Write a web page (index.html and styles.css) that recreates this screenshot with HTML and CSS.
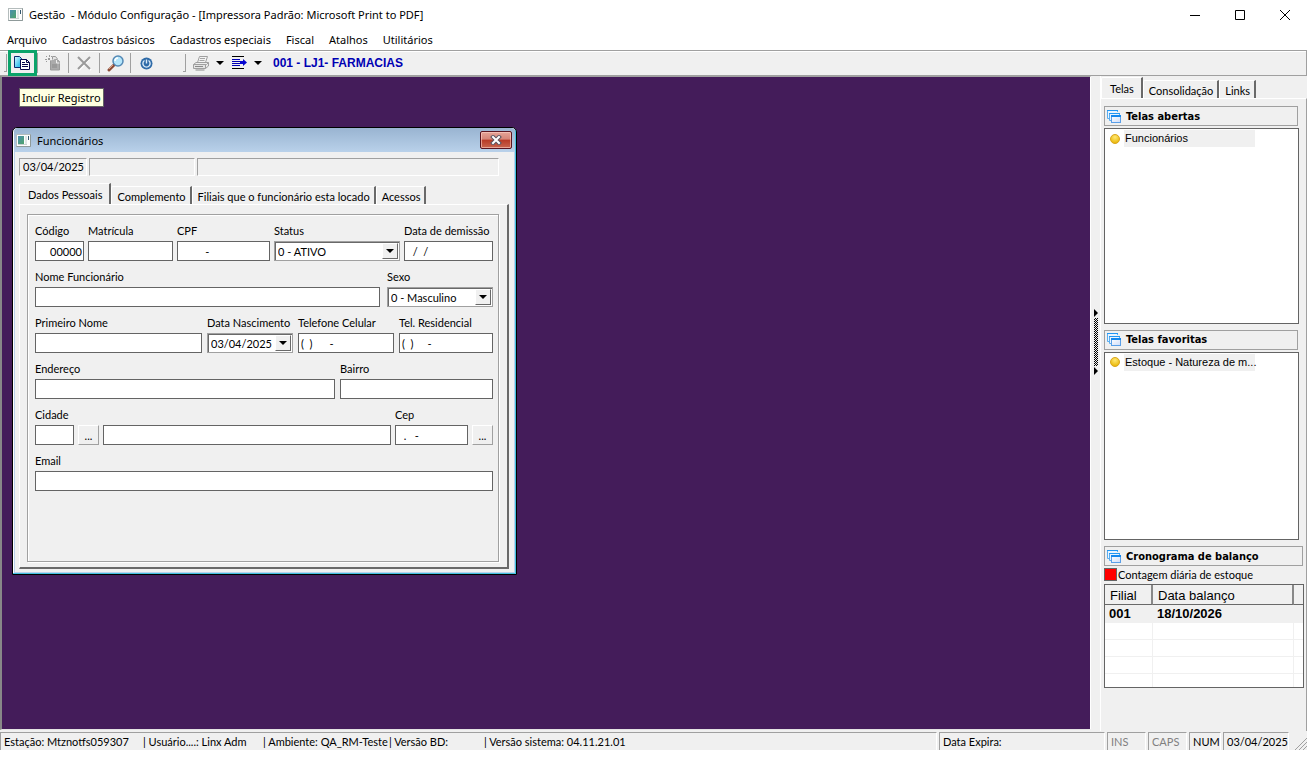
FILE: index.html
```html
<!DOCTYPE html>
<html lang="pt-BR">
<head>
    <meta charset="UTF-8">
    <meta name="viewport" content="width=device-width, initial-scale=1.0">
    <title>Gestão - Módulo Configuração</title>
    <link rel="stylesheet" href="styles.css">
</head>
<body>
    <!-- Shared icons -->
    <svg class="icon-defs" aria-hidden="true">
        <defs>
            <linearGradient id="app-green" x1="0" y1="0" x2="1" y2="1">
                <stop offset="0" stop-color="#4a8fb0"/>
                <stop offset="1" stop-color="#4fa36a"/>
            </linearGradient>
            <radialGradient id="ball-fill" cx="0.5" cy="0.3" r="0.7">
                <stop offset="0" stop-color="#ffe873"/>
                <stop offset="1" stop-color="#e8b400"/>
            </radialGradient>
            <linearGradient id="pane-fill" x1="0" y1="0" x2="1" y2="1">
                <stop offset="0" stop-color="#ffffff"/>
                <stop offset="1" stop-color="#cfdcf8"/>
            </linearGradient>
            <linearGradient id="page-cyan" x1="0" y1="0" x2="1" y2="1">
                <stop offset="0.1" stop-color="#c8f4ff"/>
                <stop offset="0.7" stop-color="#3fc4f0"/>
            </linearGradient>
        </defs>
        <symbol id="icon-app" viewBox="0 0 15 13">
            <rect x="0.5" y="0.5" width="14" height="12" fill="#fdfdfd" stroke="#b4bcbc"/>
            <path d="M0.5 12.5H14.5V0.5" fill="none" stroke="#8f9a9a"/>
            <rect x="2" y="2" width="6" height="8" fill="url(#app-green)"/>
            <rect x="9" y="2" width="2" height="8" fill="#dfe6e6"/>
            <path d="M12.5 2v4" stroke="#34566e"/>
            <path d="M2 10.5h9" stroke="#c9d2d2"/>
        </symbol>
        <symbol id="icon-windows" viewBox="0 0 15 15">
            <path d="M2 9.5H0.5V1.5H10.500V3" fill="#eaf4ff" stroke="#5aaef0"/>
            <path d="M0 1.5h11" stroke="#2196f3"/>
            <path d="M4 11.500H2.500V4.500H12.500V6" fill="#eaf4ff" stroke="#5aaef0"/>
            <path d="M2 4.5h11" stroke="#2196f3"/>
            <rect x="4.500" y="7" width="9" height="6.500" fill="url(#pane-fill)" stroke="#5a9fe8"/>
            <path d="M4 7h10" stroke="#1488ee" stroke-width="2"/>
        </symbol>
        <symbol id="icon-ball" viewBox="0 0 10 10">
            <circle cx="5" cy="5" r="4.500" fill="url(#ball-fill)" stroke="#d9a520"/>
        </symbol>
    </svg>

    <div class="app">
        <!-- Title bar -->
        <header class="title-bar">
            <svg class="app-icon"><use href="#icon-app"/></svg>
            <span class="title-text">Gestão&nbsp; - Módulo Configuração - [Impressora Padrão: Microsoft Print to PDF]</span>
            <div class="window-buttons">
                <button type="button" aria-label="Minimizar"><svg viewBox="0 0 12 12"><path d="M1 6.5h10"/></svg></button>
                <button type="button" aria-label="Maximizar"><svg viewBox="0 0 12 12"><path d="M1.500 1.500h9v9h-9z"/></svg></button>
                <button type="button" aria-label="Fechar"><svg viewBox="0 0 12 12"><path d="M1 1l10 10M11 1L1 11"/></svg></button>
            </div>
        </header>

        <!-- Menu -->
        <nav class="menu-bar">
            <button type="button">Arquivo</button>
            <button type="button">Cadastros básicos</button>
            <button type="button">Cadastros especiais</button>
            <button type="button">Fiscal</button>
            <button type="button">Atalhos</button>
            <button type="button">Utilitários</button>
        </nav>

        <!-- Toolbar -->
        <div class="toolbar">
            <span class="grip"></span>
            <button type="button" class="tool tool-active" aria-label="Incluir Registro">
                <svg width="17" height="14" viewBox="0 0 17 14">
                    <path d="M0.500 0.500H5.500L7.500 2.500V11.500H0.500Z" fill="url(#page-cyan)" stroke="#0a2a6e"/>
                    <path d="M6.500 3.500H12.500L15.500 6.500V13.500H6.500Z" fill="#fff" stroke="#06064a"/>
                    <path d="M12.500 3.500V6.500H15.500M8 6.500h3M8 8.500h6M8 10.500h6" fill="none" stroke="#06064a"/>
                </svg>
            </button>
            <span class="divider"></span>
            <button type="button" class="tool" aria-label="Colar">
                <svg width="16" height="16" viewBox="0 0 16 16">
                    <path d="M5.500 5.500V15H14.500V6.500L12 4.500H9" fill="#ababab" stroke="#9a9a9a"/>
                    <path d="M7.500 4.500v-3h3l2 2.500" fill="#e4e4e4" stroke="#9a9a9a"/>
                    <rect x="7" y="9" width="5" height="4" fill="#9a9a9a"/>
                    <path d="M11.500 5v3h3" fill="none" stroke="#eee"/>
                    <path d="M1 1l1 1M4.500 0v2M7 1L6 2M0 4.500h2M1 7l1-1M3 3l2 2M5 3L3 5" fill="none" stroke="#9a9a9a"/>
                </svg>
            </button>
            <span class="divider"></span>
            <button type="button" class="tool" aria-label="Excluir">
                <svg width="15" height="15" viewBox="0 0 15 15">
                    <path d="M2 2L14 14M13 2L2 14" fill="none" stroke="#fff" stroke-width="2"/>
                    <path d="M1 1L13 13M13 1L1 13" fill="none" stroke="#9a9a9a" stroke-width="2"/>
                </svg>
            </button>
            <span class="divider"></span>
            <button type="button" class="tool" aria-label="Pesquisar">
                <svg width="17" height="17" viewBox="0 0 17 17">
                    <path d="M2 15L7 10" stroke="#8b4a35" stroke-width="3" stroke-linecap="round"/>
                    <path d="M2 14L6 10" stroke="#d9a184" stroke-width="1"/>
                    <circle cx="11" cy="6" r="5" fill="#b5e6fb" stroke="#5489b5" stroke-width="1.500"/>
                    <path d="M8 6a3 3 0 0 1 3-3" fill="none" stroke="#fff" stroke-width="1.500"/>
                </svg>
            </button>
            <span class="divider"></span>
            <button type="button" class="tool" aria-label="Sair">
                <svg width="13" height="13" viewBox="0 0 13 13">
                    <circle cx="6.500" cy="6.500" r="6" fill="#2f6ba8"/>
                    <path d="M4.500 3.500a3.600 3.600 0 1 0 4 0M6.500 2.500v4" fill="none" stroke="#dcebf8" stroke-width="1.400"/>
                </svg>
            </button>
            <span class="grip grip-second"></span>
            <button type="button" class="tool" aria-label="Imprimir">
                <svg width="18" height="15" viewBox="0 0 18 15">
                    <path d="M5.500 6.500L7.500 0.500H15.500L13.500 6.500" fill="#f4f4f4" stroke="#a0a0a0"/>
                    <path d="M8 2.500h5M7.500 4.500h5" stroke="#a5a5a5"/>
                    <path d="M1.500 8.500L4 6.500H16.500L14.500 8.500Z" fill="#eee" stroke="#a0a0a0"/>
                    <path d="M1.500 8.500H13.500V12.500H1.500ZM13.500 12.500L16.500 10V6.500" fill="#e4e4e4" stroke="#a0a0a0"/>
                    <path d="M3 10.500h8M3.500 14h9" stroke="#8a8a8a" stroke-width="1"/>
                </svg>
            </button>
            <button type="button" class="drop" aria-label="Opções de impressão"><span class="arrow-down"></span></button>
            <button type="button" class="tool" aria-label="Lista">
                <svg width="16" height="14" viewBox="0 0 16 14">
                    <path d="M1 0.500h12M1 12.500h12" stroke="#000"/>
                    <path d="M1 3.500h8M1 5.500h8M1 7.500h8M1 9.500h8" stroke="#0000b4"/>
                    <path d="M9 6.500h4" stroke="#0606d0" stroke-width="3"/>
                    <path d="M12 3v7L16 6.500z" fill="#0606d0"/>
                </svg>
            </button>
            <button type="button" class="drop" aria-label="Opções da lista"><span class="arrow-down"></span></button>
            <span class="branch">001 - LJ1- FARMACIAS</span>
        </div>

        <main class="workspace">
            <!-- Desktop with the child window -->
            <section class="desktop">
                <div class="tooltip" role="tooltip">Incluir Registro</div>

                <div class="child-window">
                    <div class="child-title">
                        <svg class="app-icon"><use href="#icon-app"/></svg>
                        <span>Funcionários</span>
                        <button type="button" class="close-btn" aria-label="Fechar">
                            <svg width="12" height="10" viewBox="0 0 12 10">
                                <path d="M3 2L9 8M9 2L3 8" stroke="#5b5560" stroke-width="4" stroke-linecap="square"/>
                                <path d="M3 2L9 8M9 2L3 8" stroke="#fff" stroke-width="2" stroke-linecap="square"/>
                            </svg>
                        </button>
                    </div>
                    <div class="info-row">
                        <span class="info-cell">03/04/2025</span>
                        <span class="info-cell"></span>
                        <span class="info-cell"></span>
                    </div>
                    <div class="tabs form-tabs" role="tablist">
                        <button type="button" role="tab" class="tab tab-selected" aria-selected="true">Dados Pessoais</button>
                        <button type="button" role="tab" class="tab">Complemento</button>
                        <button type="button" role="tab" class="tab">Filiais que o funcionário esta locado</button>
                        <button type="button" role="tab" class="tab">Acessos</button>
                    </div>
                    <div class="tab-page">
                        <form class="employee-form">
                            <div class="form-row row-code">
                                <div class="field">
                                    <label for="codigo">Código</label>
                                    <input type="text" id="codigo" class="align-right" value="00000">
                                </div>
                                <div class="field">
                                    <label for="matricula">Matrícula</label>
                                    <input type="text" id="matricula">
                                </div>
                                <div class="field">
                                    <label for="cpf">CPF</label>
                                    <input type="text" id="cpf" value="         -">
                                </div>
                                <div class="field">
                                    <label for="status">Status</label>
                                    <div class="combo">
                                        <select id="status"><option>0 - ATIVO</option></select>
                                        <span class="combo-btn"><span class="arrow-down"></span></span>
                                    </div>
                                </div>
                                <div class="field">
                                    <label for="demissao">Data de demissão</label>
                                    <input type="text" id="demissao" value="  /  /">
                                </div>
                            </div>
                            <div class="form-row row-name">
                                <div class="field">
                                    <label for="nome">Nome Funcionário</label>
                                    <input type="text" id="nome">
                                </div>
                                <div class="field">
                                    <label for="sexo">Sexo</label>
                                    <div class="combo">
                                        <select id="sexo"><option>0 - Masculino</option></select>
                                        <span class="combo-btn"><span class="arrow-down"></span></span>
                                    </div>
                                </div>
                            </div>
                            <div class="form-row row-phone">
                                <div class="field">
                                    <label for="primeiro-nome">Primeiro Nome</label>
                                    <input type="text" id="primeiro-nome">
                                </div>
                                <div class="field">
                                    <label for="nascimento">Data Nascimento</label>
                                    <div class="combo">
                                        <input type="text" id="nascimento" value="03/04/2025">
                                        <button type="button" class="combo-btn" aria-label="Abrir calendário"><span class="arrow-down"></span></button>
                                    </div>
                                </div>
                                <div class="field">
                                    <label for="celular">Telefone Celular</label>
                                    <input type="text" id="celular" value="(  )      -">
                                </div>
                                <div class="field">
                                    <label for="residencial">Tel. Residencial</label>
                                    <input type="text" id="residencial" value="(  )     -">
                                </div>
                            </div>
                            <div class="form-row row-address">
                                <div class="field">
                                    <label for="endereco">Endereço</label>
                                    <input type="text" id="endereco">
                                </div>
                                <div class="field">
                                    <label for="bairro">Bairro</label>
                                    <input type="text" id="bairro">
                                </div>
                            </div>
                            <div class="form-row row-city">
                                <div class="field">
                                    <label for="cidade">Cidade</label>
                                    <input type="text" id="cidade">
                                </div>
                                <button type="button" class="lookup" aria-label="Buscar cidade">...</button>
                                <input type="text" aria-label="Nome da cidade">
                                <div class="field">
                                    <label for="cep">Cep</label>
                                    <input type="text" id="cep" value="  .   -">
                                </div>
                                <button type="button" class="lookup" aria-label="Buscar cep">...</button>
                            </div>
                            <div class="form-row">
                                <div class="field">
                                    <label for="email">Email</label>
                                    <input type="text" id="email">
                                </div>
                            </div>
                        </form>
                    </div>
                </div>
            </section>

            <!-- Splitter -->
            <div class="splitter">
                <span class="arrow-right"></span>
                <span class="splitter-dots"></span>
                <span class="arrow-right"></span>
            </div>

            <!-- Side panel -->
            <aside class="side-panel">
                <div class="tabs side-tabs" role="tablist">
                    <button type="button" role="tab" class="tab tab-selected" aria-selected="true">Telas</button>
                    <button type="button" role="tab" class="tab">Consolidação</button>
                    <button type="button" role="tab" class="tab">Links</button>
                </div>
                <div class="side-page">
                    <h2 class="side-heading"><svg><use href="#icon-windows"/></svg>Telas abertas</h2>
                    <ul class="screen-list list-open">
                        <li><svg><use href="#icon-ball"/></svg><span>Funcionários</span></li>
                    </ul>
                    <h2 class="side-heading"><svg><use href="#icon-windows"/></svg>Telas favoritas</h2>
                    <ul class="screen-list list-favorites">
                        <li><svg><use href="#icon-ball"/></svg><span>Estoque - Natureza de m...</span></li>
                    </ul>
                    <h2 class="side-heading heading-wide"><svg><use href="#icon-windows"/></svg>Cronograma de balanço</h2>
                    <div class="legend"><span class="legend-color"></span>Contagem diária de estoque</div>
                    <table class="schedule">
                        <thead>
                            <tr><th class="col-branch">Filial</th><th>Data balanço</th><th class="col-end"></th></tr>
                        </thead>
                        <tbody>
                            <tr class="row-selected"><td>001</td><td>18/10/2026</td><td></td></tr>
                            <tr><td></td><td></td><td></td></tr>
                            <tr><td></td><td></td><td></td></tr>
                            <tr><td></td><td></td><td></td></tr>
                            <tr class="row-last"><td></td><td></td><td></td></tr>
                        </tbody>
                    </table>
                </div>
            </aside>
        </main>

        <!-- Status bar -->
        <footer class="status-bar">
            <div class="status-cell status-main">
                <span class="status-station">Estação: Mtznotfs059307</span>
                <span class="status-user">| Usuário....: Linx Adm</span>
                <span class="status-env">| Ambiente: QA_RM-Teste</span>
                <span class="status-db">| Versão BD:</span>
                <span>| Versão sistema: 04.11.21.01</span>
            </div>
            <div class="status-cell status-expire">Data Expira:</div>
            <div class="status-cell status-key key-off">INS</div>
            <div class="status-cell status-key key-off">CAPS</div>
            <div class="status-cell status-num">NUM</div>
            <div class="status-cell status-date">03/04/2025</div>
            <svg class="resize-grip" viewBox="0 0 12 12"><path d="M0 12L12 0M4 12L12 4M8 12L12 8" stroke="#a0a0a0"/></svg>
        </footer>
    </div>
</body>
</html>
```
FILE: styles.css
```css
* {
    box-sizing: border-box;
}
body {
    margin: 0;
    background-color: #fff;
    color: #000;
    font-family: Lato, "Liberation Sans", sans-serif;
    font-size: 11px;
}
button, input, select {
    font: inherit;
    color: inherit;
    border-radius: 0;
    margin: 0;
    padding: 0;
}
button {
    border: none;
    background: none;
}
.icon-defs {
    position: absolute;
    width: 0;
    height: 0;
}
.app {
    display: flex;
    flex-direction: column;
    height: calc(100vh - 26px);
    min-height: 700px;
}
/* Title bar */
.title-bar {
    display: flex;
    align-items: center;
    height: 29px;
    padding-left: 8px;
    font-family: "Noto Sans", "Open Sans", sans-serif;
}
.app-icon {
    width: 15px;
    height: 13px;
    margin-right: 6px;
}
.window-buttons {
    display: flex;
    margin-left: auto;
}
.window-buttons button {
    display: flex;
    align-items: center;
    justify-content: center;
    width: 45px;
    height: 29px;
}
.window-buttons svg {
    width: 12px;
    height: 12px;
    fill: none;
    stroke: #000;
}
/* Menu */
.menu-bar {
    display: flex;
    align-items: center;
    gap: 15px;
    height: 21px;
    padding-left: 7px;
    font-family: "Noto Sans", "Open Sans", sans-serif;
}
/* Toolbar */
.toolbar {
    display: flex;
    align-items: center;
    height: 26px;
    padding-left: 4px;
    background-color: #f0f0f0;
    border: 1px solid #a0a0a0;
    border-left: none;
    box-shadow: inset 0 1px 0 #fff;
}
.grip {
    width: 3px;
    height: 18px;
    border-right: 1px solid #a0a0a0;
    border-bottom: 1px solid #a0a0a0;
}
.grip-second {
    margin-left: 22px;
}
.divider {
    width: 1px;
    height: 20px;
    background-color: #a0a0a0;
}
.tool {
    display: flex;
    align-items: center;
    justify-content: center;
    width: 30px;
    height: 22px;
}
.tool-active {
    position: relative;
    outline: 3px solid #0ba36a;
    background-color: #f0f0f0;
    width: 23px;
    height: 20px;
    margin: 0 3px 0 4px;
    z-index: 2;
}
.drop {
    display: flex;
    justify-content: center;
    width: 8px;
}
.arrow-down {
    width: 0;
    height: 0;
    border: 4px solid transparent;
    border-top-color: #000;
    border-bottom: none;
}
.branch {
    margin-left: 11px;
    color: #0000b4;
    font-family: "Liberation Sans", Arial, sans-serif;
    font-size: 12px;
    font-weight: bold;
}
/* Workspace */
.workspace {
    display: flex;
    flex: 1;
    min-height: 0;
    background-color: #f0f0f0;
}
.desktop {
    position: relative;
    flex: 1;
    overflow: hidden;
    background-color: #441c5a;
    border: 1px solid #a0a0a0;
    border-left: 2px solid #888;
    border-right-color: #fff;
    border-bottom-color: #e3e3e3;
    margin-bottom: 1px;
}
.tooltip {
    position: absolute;
    left: 17px;
    top: 11px;
    padding: 0 2px;
    line-height: 17px;
    border: 1px solid #646464;
    background-color: #ffffe1;
    font-family: "Noto Sans", "Open Sans", sans-serif;
}
/* Child window */
.child-window {
    position: absolute;
    left: 10px;
    top: 50px;
    display: flex;
    flex-direction: column;
    width: 505px;
    height: 448px;
    padding: 0 4px 4px;
    background-color: #f0f0f0;
    border: 1px solid #000;
    border-radius: 5px 5px 0 0;
    box-shadow: inset -1px -1px 0 #43c0e0, inset 1px 1px 0 #fff, inset -2px -2px 0 #b9d1ea, inset 2px 0 0 #b9d1ea;
}
.child-title {
    display: flex;
    align-items: center;
    height: 24px;
    margin: 0 -3px 6px;
    padding-left: 2px;
    background: linear-gradient(#99b4d1, #b9d1ea);
    border-radius: 4px 4px 0 0;
    font-family: "Noto Sans", "Open Sans", sans-serif;
}
.close-btn {
    display: flex;
    align-items: center;
    justify-content: center;
    width: 32px;
    height: 18px;
    margin: 0 3px 0 auto;
    border: 1px solid #5a1520;
    border-radius: 2px;
    background: linear-gradient(#e5a498 0%, #d68577 45%, #b83a26 50%, #c9654f 100%);
    box-shadow: inset 0 0 0 1px rgba(255, 210, 200, 0.6);
}
.info-row {
    display: grid;
    grid-template-columns: 68px 106px 1fr;
    gap: 2px;
    margin: 0 13px 7px 2px;
}
.info-cell {
    height: 18px;
    padding-left: 3px;
    line-height: 16px;
    border: 1px solid #fff;
    border-top-color: #a0a0a0;
    border-left-color: #a0a0a0;
}
/* Tabs */
.tabs {
    display: flex;
    align-items: flex-end;
}
.tab {
    height: 18px;
    padding: 1px 4px 0 5px;
    border-top: 1px solid #fff;
    border-left: 1px solid #fff;
    border-right: 2px solid #696969;
    border-top-left-radius: 2px;
    white-space: nowrap;
}
.tab-selected {
    height: 21px;
    padding: 1px 7px 0 8px;
}
.form-tabs {
    margin: 0 2px;
}
.tab-page {
    display: flex;
    flex: 1;
    padding: 9px 8px 5px 7px;
    margin: 0 3px 1px 2px;
    border: 1px solid #fff;
    border-right: 2px solid #696969;
    border-bottom: 2px solid #696969;
}
/* Form */
.employee-form {
    display: flex;
    flex-direction: column;
    gap: 10px;
    flex: 1;
    padding: 10px 5px 0 7px;
    border: 1px solid #a0a0a0;
    box-shadow: inset 1px 1px 0 #fff, 1px 1px 0 #fff;
}
.form-row {
    display: grid;
    align-items: end;
    gap: 4px;
}
.row-code {
    grid-template-columns: 49fr 85fr 93fr 126fr 89fr;
}
.row-name {
    grid-template-columns: 345fr 106fr;
    gap: 7px;
}
.row-phone {
    grid-template-columns: 167fr 86fr 96fr 94fr;
    gap: 5px;
}
.row-address {
    grid-template-columns: 300fr 153fr;
    gap: 5px;
}
.row-city {
    grid-template-columns: 39px 21px 1fr 73px 21px;
}
.field {
    display: flex;
    flex-direction: column;
    min-width: 0;
}
.field label {
    margin-bottom: 4px;
    line-height: 12px;
    white-space: nowrap;
}
.form-row input {
    width: 100%;
    min-width: 0;
    height: 20px;
    padding: 0 2px;
    border: 1px solid #646464;
    background-color: #fff;
    white-space: pre;
}
.form-row .align-right {
    padding: 0 1px;
    text-align: right;
}
.combo {
    display: flex;
    height: 20px;
    padding: 1px;
    background-color: #fff;
    border: 1px solid #a0a0a0;
    box-shadow: inset 1px 1px 0 #696969;
}
.form-row .combo select, .form-row .combo input {
    appearance: none;
    flex: 1;
    width: 0;
    height: 100%;
    padding: 0 0 0 2px;
    border: none;
    background: none;
}
.combo-btn {
    display: flex;
    align-items: center;
    justify-content: center;
    width: 16px;
    background-color: #f0f0f0;
    border: 1px solid #fff;
    border-right-color: #696969;
    border-bottom-color: #696969;
    pointer-events: none;
}
.lookup {
    height: 20px;
    border: 1px solid #fff;
    border-right-color: #a0a0a0;
    border-bottom-color: #a0a0a0;
}
/* Splitter */
.splitter {
    display: flex;
    flex-direction: column;
    align-items: center;
    width: 9px;
    padding-top: 233px;
}
.arrow-right {
    width: 0;
    height: 0;
    border: 4px solid transparent;
    border-left-color: #000;
    border-right: none;
}
.splitter-dots {
    width: 4px;
    height: 48px;
    margin: 1px 0;
    background: repeating-conic-gradient(#000 0 25%, #f0f0f0 0 50%) 0 0 / 2px 2px;
}
/* Side panel */
.side-panel {
    display: flex;
    flex-direction: column;
    width: 207px;
    padding-top: 1px;
    border-left: 1px solid #fff;
}
.side-page {
    display: flex;
    flex: 1;
    flex-direction: column;
    padding: 7px 7px 43px 3px;
    border-top: 1px solid #fff;
    border-right: 1px solid #a0a0a0;
}
.side-heading {
    display: flex;
    align-items: center;
    height: 20px;
    margin: 0 1px 2px 0;
    padding-left: 2px;
    border: 1px solid #a0a0a0;
    font-family: "DejaVu Sans Condensed", "DejaVu Sans", sans-serif;
    font-size: 11px;
    font-weight: bold;
}
.side-heading svg {
    width: 15px;
    height: 15px;
    margin-right: 4px;
}
.heading-wide {
    margin: 0 -4px 0 0;
}
.screen-list {
    list-style: none;
    margin: 0 0 6px;
    padding: 1px 4px;
    border: 1px solid #646464;
    background-color: #fff;
    font-family: "Liberation Sans", Arial, sans-serif;
}
.list-open {
    flex: 196;
}
.list-favorites {
    flex: 188;
}
.screen-list li {
    display: flex;
    align-items: center;
    gap: 4px;
}
.screen-list svg {
    width: 10px;
    height: 10px;
    margin-left: 1px;
}
.screen-list span {
    width: 131px;
    padding-left: 1px;
    line-height: 17px;
    background-color: #f0f0f0;
    white-space: nowrap;
}
.legend {
    display: flex;
    align-items: center;
    height: 16px;
    margin-bottom: 2px;
}
.legend-color {
    width: 13px;
    height: 13px;
    margin-right: 1px;
    border: 1px solid #646464;
    background-color: #f00;
}
.schedule {
    width: 200px;
    table-layout: fixed;
    border-collapse: separate;
    border-spacing: 0;
    border: 1px solid #646464;
    background-color: #fff;
    font-family: "Liberation Sans", Arial, sans-serif;
    font-size: 13px;
}
.schedule th {
    height: 20px;
    padding: 1px 5px 0;
    text-align: left;
    font-weight: normal;
    background-color: #f0f0f0;
    border-right: 2px solid #888;
    border-bottom: 1px solid #696969;
}
.schedule .col-branch {
    width: 48px;
}
.schedule .col-end {
    width: 9px;
    padding: 0;
    border-right: none;
}
.schedule td {
    height: 17px;
    padding: 0 4px;
    line-height: 16px;
    font-weight: bold;
    border-right: 1px solid #f0f0f0;
    border-bottom: 1px solid #f0f0f0;
}
.schedule td:last-child {
    padding: 0;
    border-right: none;
    background-color: #fff;
}
.schedule .row-selected td {
    height: 18px;
    padding-top: 1px;
    background-color: #f0f0f0;
}
.schedule .row-last td {
    height: 13px;
    border-bottom: none;
}
/* Status bar */
.status-bar {
    display: flex;
    align-items: center;
    gap: 2px;
    height: 19px;
    background-color: #f0f0f0;
}
.status-cell {
    height: 18px;
    padding-left: 3px;
    line-height: 18px;
    border-top: 1px solid #a0a0a0;
    border-left: 1px solid #a0a0a0;
    border-right: 1px solid #fff;
    white-space: nowrap;
}
.status-main {
    display: flex;
    flex: 1;
    overflow: hidden;
}
.status-station {
    width: 139px;
}
.status-user {
    width: 120px;
}
.status-env {
    width: 126px;
}
.status-db {
    width: 95px;
}
.status-expire {
    width: 166px;
}
.status-key {
    width: 39px;
}
.status-num {
    width: 32px;
}
.status-date {
    width: 66px;
}
.key-off {
    color: #808080;
}
.resize-grip {
    width: 12px;
    height: 12px;
    margin-left: 4px;
    align-self: flex-end;
}
```
